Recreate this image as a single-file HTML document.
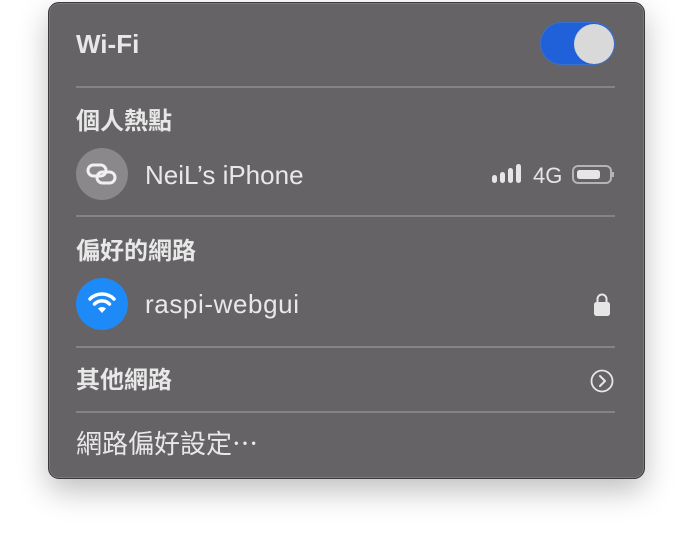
<!DOCTYPE html>
<html><head><meta charset="utf-8"><style>
body{margin:0;width:692px;height:534px;background:#fff;position:relative;overflow:hidden;font-family:"Liberation Sans","Noto Sans CJK TC",sans-serif;color:#e8e8e8}
.panel{position:absolute;left:48px;top:2px;width:595px;height:475px;background:#656366;border-radius:11px;border:1px solid #3a393b;box-shadow:0 0 0 1px #7a787b inset,0 12px 30px rgba(0,0,0,.25)}
.t{position:absolute;white-space:nowrap;line-height:1}
.b{font-weight:bold}
.hr{position:absolute;left:76px;width:539px;height:2px;background:#858386}
.c{position:absolute;border-radius:50%}
</style></head><body>
<div class="panel"></div>
<div class="t b" style="left:76px;top:31px;font-size:26px">Wi-Fi</div>
<div style="position:absolute;left:540px;top:22px;width:75px;height:43px;border-radius:22px;background:#2060d8;border:1px solid #3a70d0;box-sizing:border-box"></div>
<div class="c" style="left:574px;top:24px;width:40px;height:40px;background:#d9d9d9"></div>
<div class="hr" style="top:86px"></div>
<div class="t b" style="left:76px;top:110px;font-size:24px">個人熱點</div>
<div class="c" style="left:76px;top:148px;width:52px;height:52px;background:#8a888b"></div>
<svg style="position:absolute;left:84px;top:160px" width="36" height="28" viewBox="0 0 36 28"><g fill="none" stroke="#f0f0f0" stroke-width="3"><rect x="4" y="5" width="18" height="11" rx="5.5"/><rect x="13" y="12" width="18" height="11" rx="5.5"/></g></svg>
<div class="t" style="left:145px;top:162px;font-size:26px">NeiL’s iPhone</div>
<svg style="position:absolute;left:490px;top:163px" width="126" height="22" viewBox="0 0 126 22"><g fill="#e6e6e6"><rect x="2" y="12" width="5" height="8" rx="2.5"/><rect x="10" y="9" width="5" height="11" rx="2.5"/><rect x="18" y="5" width="5" height="15" rx="2.5"/><rect x="26" y="1" width="5" height="19" rx="2.5"/></g><text x="43" y="20" font-family="Liberation Sans" font-size="22" fill="#e6e6e6">4G</text><rect x="83" y="3" width="38" height="17" rx="5" fill="none" stroke="#b4b4b4" stroke-width="2"/><rect x="87" y="7" width="23" height="9" rx="2.5" fill="#e6e6e6"/><path d="M123 9v5" stroke="#b4b4b4" stroke-width="2"/></svg>
<div class="hr" style="top:215px"></div>
<div class="t b" style="left:76px;top:240px;font-size:24px">偏好的網路</div>
<div class="c" style="left:76px;top:278px;width:52px;height:52px;background:#1e8af7"></div>
<svg style="position:absolute;left:86px;top:289px" width="32" height="28" viewBox="0 0 32 28"><g fill="none" stroke="#fff" stroke-width="3.5" stroke-linecap="round"><path d="M4 10a17 17 0 0 1 24 0"/><path d="M8.5 15a10.5 10.5 0 0 1 15 0"/></g><path d="M12 19.5a6 6 0 0 1 8 0L16 24z" fill="#fff"/></svg>
<div class="t" style="left:145px;top:291px;font-size:26px;letter-spacing:0.6px">raspi-webgui</div>
<svg style="position:absolute;left:593px;top:291px" width="18" height="26" viewBox="0 0 18 26"><path d="M4.5 12V8a4.5 4.5 0 0 1 9 0v4" fill="none" stroke="#e6e6e6" stroke-width="2"/><rect x="1" y="11" width="16" height="14" rx="2.5" fill="#e6e6e6"/></svg>
<div class="hr" style="top:346px"></div>
<div class="t b" style="left:76px;top:369px;font-size:24px">其他網路</div>
<svg style="position:absolute;left:590px;top:369px" width="24" height="24" viewBox="0 0 24 24"><circle cx="12" cy="12" r="10.5" fill="none" stroke="#e6e6e6" stroke-width="1.8"/><path d="M10 7l5 5-5 5" fill="none" stroke="#e6e6e6" stroke-width="2" stroke-linecap="round" stroke-linejoin="round"/></svg>
<div class="hr" style="top:411px"></div>
<div class="t" style="left:76px;top:431px;font-size:26px">網路偏好設定⋯</div>
</body></html>
